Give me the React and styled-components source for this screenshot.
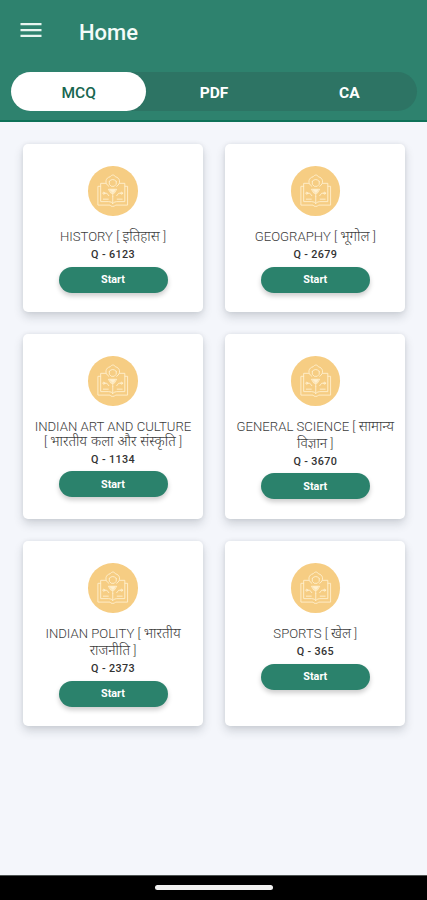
import React from 'react';
import styled, { createGlobalStyle } from 'styled-components';

const GlobalStyle = createGlobalStyle`
  * { box-sizing: border-box; }
  body { margin: 0; background: #f4f6fb; }
  button { font: inherit; border: 0; padding: 0; }
`;

const Screen = styled.div`
  width: 427px;
  height: 900px;
  overflow: hidden;
  display: flex;
  flex-direction: column;
  background: #f4f6fb;
  font-family: Roboto, 'Noto Sans', 'Noto Sans Devanagari', sans-serif;
`;

const Header = styled.header`
  height: 122px;
  flex: none;
  background: #2e826e;
  border-bottom: 2px solid #0d7158;
`;

const AppBar = styled.div`
  height: 62px;
  display: flex;
  align-items: center;
  padding: 4px 0 0 20px;
  gap: 37px;
`;

const MenuButton = styled.button`
  width: 22px;
  height: 20px;
  display: flex;
  background: none;
  margin-top: -4px;
`;

const Title = styled.h1`
  margin: 0;
  font-size: 22px;
  font-weight: 500;
  line-height: 28px;
  color: #f4fbf8;
`;

const Tabs = styled.nav`
  display: flex;
  height: 39px;
  margin: 10px 10px 0 11px;
  border-radius: 20px;
  background: #2d7464;
`;

const Tab = styled.button`
  flex: 1;
  height: 39px;
  padding-top: 3px;
  border-radius: 20px;
  font-size: 15.5px;
  font-weight: ${(p) => (p.$active ? 500 : 700)};
  color: ${(p) => (p.$active ? '#17664f' : '#fff')};
  background: ${(p) => (p.$active ? '#fff' : 'transparent')};
`;

const Grid = styled.main`
  flex: 1;
  display: grid;
  grid-template-columns: 180px 180px;
  grid-template-rows: 167.5px 185px 185px;
  column-gap: 22.3px;
  row-gap: 22.3px;
  padding: 22.4px 0 0 23px;
`;

const Card = styled.article`
  display: flex;
  flex-direction: column;
  align-items: center;
  padding-top: 22px;
  border-radius: 5px;
  background: #fff;
  box-shadow: 0 5px 10px rgba(30, 40, 55, 0.17), 0 0 4px rgba(30, 40, 55, 0.08);
`;

const Badge = styled.div`
  width: 49.5px;
  height: 49.5px;
  flex: none;
  border-radius: 50%;
  background: #f6cd83;
`;

const Subject = styled.h2`
  margin: 11.5px 0 0;
  font-size: 13.15px;
  font-weight: 300;
  color: #3c3c3c;
  text-align: center;
`;

const Line = styled.span`
  display: block;
  height: ${(p) => p.$height}px;
  line-height: 19px;
  white-space: nowrap;
`;

const Hindi = styled.span`
  font-size: 14px;
  line-height: 1;
  word-spacing: 0.5px;
`;

const Count = styled.div`
  height: 14px;
  line-height: 14px;
  font-size: 10.8px;
  font-weight: 500;
  letter-spacing: 0.35px;
  color: #333;
`;

const StartButton = styled.button`
  width: 109px;
  height: 26px;
  margin-top: 4.6px;
  border-radius: 13px;
  background: #2b826c;
  color: #fff;
  font-size: 10.8px;
  font-weight: 700;
  box-shadow: 0 3px 5px rgba(0, 0, 0, 0.2);
`;

const NavBar = styled.footer`
  height: 25px;
  flex: none;
  display: flex;
  justify-content: center;
  padding-top: 9px;
  border-top: 1px solid #4d5351;
  background: #000;
`;

const HomeHandle = styled.div`
  width: 118px;
  height: 5px;
  border-radius: 3px;
  background: #f1f1f1;
`;

const MenuIcon = () => (
  <svg width="22" height="20" viewBox="0 0 22 20" fill="#e8f5f0">
    <path d="M.5 2h21v2.300H.5zM.5 7.900h21v2.300H.5zM.5 13.800h21v2.300H.5z" />
  </svg>
);

const BookIcon = () => (
  <svg width="49.5" height="49.5" viewBox="0 0 50 50" fill="none" stroke="#fff0d0" strokeWidth="0.9" strokeLinejoin="round" strokeLinecap="round">
    <path d="M18 17.500h-5.200v3H10v19h12.200q.5 1.300 2.800 1.300t2.800-1.300H40v-19h-2.800v-3H32" />
    <path d="M12.800 20.500V36H21q3 0 4 2 1-2 4-2h8.200V20.500M25 31v7" />
    <path d="M21 20.500c-5-3-3-9 1.200-9.500 2-2.500 4.200-2.500 5.600 0 4.200.5 6.200 6.500 1.200 9.500M21.500 15.500q3.500-4 7 0M21.500 15.500v3l2 2h3l2-2v-3M21 23.500h8l-2.500 4h-3zM25 27.500V31M16 27.500h3l2 2.500M34 27.500h-3l-2 2.500M15.500 33.500h5M29.500 33.500h5" />
    <circle cx="16" cy="27.500" r="1" />
    <circle cx="34" cy="27.500" r="1" />
    <path d="M22.500 24h5l-1.500 2.500h-2z" fill="#fff0d0" />
  </svg>
);

const subjects = [
  { lines: [{ text: 'HISTORY [ ', hindi: 'इतिहास', end: ' ]', height: 20.7 }], count: 6123 },
  { lines: [{ text: 'GEOGRAPHY [ ', hindi: 'भूगोल', end: ' ]', height: 20.7 }], count: 2679 },
  { lines: [{ text: 'INDIAN ART AND CULTURE', height: 15 }, { text: '[ ', hindi: 'भारतीय कला और संस्कृति', end: ' ]', height: 20.7 }], count: 1134 },
  { lines: [{ text: 'GENERAL SCIENCE [ ', hindi: 'सामान्य', height: 17 }, { hindi: 'विज्ञान', end: ' ]', height: 20.7 }], count: 3670 },
  { lines: [{ text: 'INDIAN POLITY [ ', hindi: 'भारतीय', height: 17 }, { hindi: 'राजनीति', end: ' ]', height: 20.7 }], count: 2373 },
  { lines: [{ text: 'SPORTS [ ', hindi: 'खेल', end: ' ]', height: 20.7 }], count: 365 },
];

const SubjectCard = ({ lines, count }) => (
  <Card>
    <Badge><BookIcon /></Badge>
    <Subject>
      {lines.map((line, i) => (
        <Line key={i} $height={line.height}>
          {line.text}
          {line.hindi && <Hindi lang="hi">{line.hindi}</Hindi>}
          {line.end}
        </Line>
      ))}
    </Subject>
    <Count>Q - {count}</Count>
    <StartButton>Start</StartButton>
  </Card>
);

export default function App() {
  return (
    <Screen>
      <GlobalStyle />
      <Header>
        <AppBar>
          <MenuButton aria-label="Menu"><MenuIcon /></MenuButton>
          <Title>Home</Title>
        </AppBar>
        <Tabs>
          <Tab $active>MCQ</Tab>
          <Tab>PDF</Tab>
          <Tab>CA</Tab>
        </Tabs>
      </Header>
      <Grid>
        {subjects.map((subject) => <SubjectCard key={subject.count} {...subject} />)}
      </Grid>
      <NavBar><HomeHandle /></NavBar>
    </Screen>
  );
}
